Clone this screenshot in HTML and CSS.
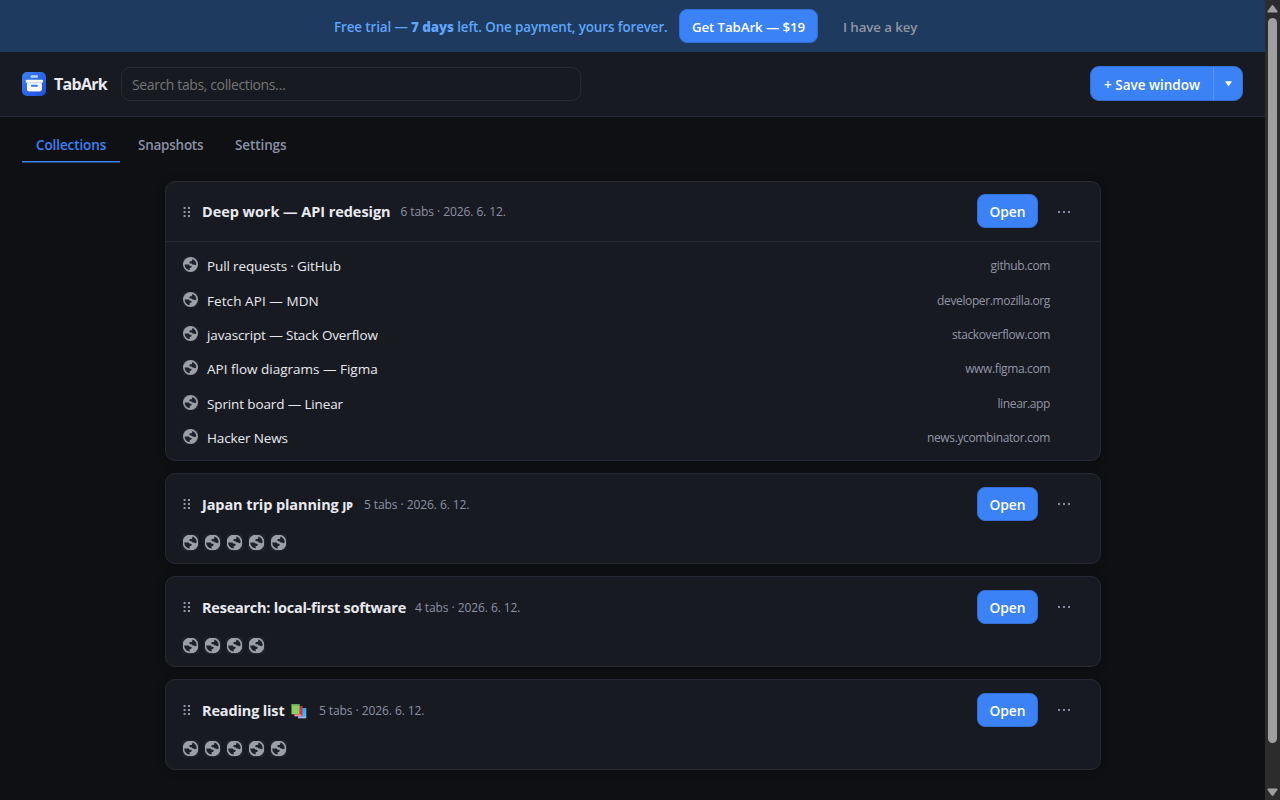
FILE: index.html
```html
<!DOCTYPE html>
<html lang="en">
<head>
<meta charset="utf-8">
<title>TabArk</title>
<link rel="stylesheet" href="styles.css">
</head>
<body>
<svg class="defs" aria-hidden="true">
  <symbol id="globe" viewBox="0 0 16 16">
    <circle cx="8" cy="8" r="8" fill="#9aa0a6"/>
    <path fill="#1e222c" d="M1.8 7.9H5.2C6.6 7.9 7 8.6 7.1 9.3H8.6C9.6 9.8 9.3 11.2 8.2 11.4H7.2V13.9C4 13.6 1.7 11.1 1.8 7.9zM9.8 2.1C12.3 2.9 14.2 5 14.2 7.7C13.6 8.9 12.2 8.9 11.6 8H10.3C9.6 7.9 9.4 7.3 9.2 6.8H7.6C6.4 6.3 6.6 4.7 7.8 4.4H9.2C9.8 4 9.9 3.2 9.8 2.1z"/>
  </symbol>
  <symbol id="grip" viewBox="0 0 8 12">
    <path fill="#9299a7" d="M.6 1h2v2h-2zM.6 5h2v2h-2zM.6 9h2v2h-2zM5 1h2v2H5zM5 5h2v2H5zM5 9h2v2H5z"/>
  </symbol>
</svg>
<div class="window">
  <div class="page">
    <div class="banner">
      <span class="trial">Free trial — <b>7 days</b> left. One payment, yours forever.</span>
      <button class="btn buy">Get TabArk — $19</button>
      <button class="ghost">I have a key</button>
    </div>
    <header class="header">
      <svg class="logo" viewBox="0 0 24 24">
        <defs><linearGradient id="lg" x1="0" y1="0" x2="1" y2="1"><stop offset="0" stop-color="#3b82f6"/><stop offset="1" stop-color="#1d4ed8"/></linearGradient></defs>
        <rect width="24" height="24" rx="5" fill="url(#lg)"/>
        <rect x="8.5" y="3.3" width="7.5" height="2.4" rx="1" fill="#b8d2fc"/>
        <rect x="3.7" y="7.8" width="17.3" height="3" rx="1.1" fill="#fff"/>
        <path fill="#dce8fd" d="M5 10.8h14.7v6.8a2 2 0 0 1-2 2H7a2 2 0 0 1-2-2z"/>
        <path fill="#fff" d="M5 11.6h14.7v5.4a2 2 0 0 1-2 2H7a2 2 0 0 1-2-2z"/>
        <rect x="9" y="12.8" width="6.8" height="2" rx=".7" fill="#3673ec"/>
      </svg>
      <span class="brand">TabArk</span>
      <input class="search" placeholder="Search tabs, collections…">
      <div class="split">
        <button class="save">+ Save window</button>
        <button class="caret"><svg viewBox="0 0 7 6"><path fill="#fff" d="M0 .3h7L3.5 5.6z"/></svg></button>
      </div>
    </header>
    <nav class="tabs">
      <a class="tab active">Collections</a>
      <a class="tab t2">Snapshots</a>
      <a class="tab t3">Settings</a>
    </nav>
    <main class="list">
      <section class="card">
        <div class="head ruled"><svg class="grip"><use href="#grip"/></svg><h2 class="n1">Deep work — API redesign</h2><span class="meta">6 tabs · 2026. 6. 12.</span><button class="btn open">Open</button><span class="more"><i></i><i></i><i></i></span></div>
        <div class="rows">
          <div class="row"><svg class="fav"><use href="#globe"/></svg><span class="tight">Pull requests · GitHub</span><em>github.com</em></div>
          <div class="row"><svg class="fav"><use href="#globe"/></svg><span class="loose">Fetch API — MDN</span><em>developer.mozilla.org</em></div>
          <div class="row"><svg class="fav"><use href="#globe"/></svg><span class="tight">javascript — Stack Overflow</span><em>stackoverflow.com</em></div>
          <div class="row"><svg class="fav"><use href="#globe"/></svg><span>API flow diagrams — Figma</span><em>www.figma.com</em></div>
          <div class="row"><svg class="fav"><use href="#globe"/></svg><span class="tight">Sprint board — Linear</span><em>linear.app</em></div>
          <div class="row"><svg class="fav"><use href="#globe"/></svg><span class="tight">Hacker News</span><em>news.ycombinator.com</em></div>
        </div>
      </section>
      <section class="card">
        <div class="head"><svg class="grip"><use href="#grip"/></svg><h2 class="n2">Japan trip planning <small>JP</small></h2><span class="meta">5 tabs · 2026. 6. 12.</span><button class="btn open">Open</button><span class="more"><i></i><i></i><i></i></span></div>
        <div class="favs"><svg><use href="#globe"/></svg><svg><use href="#globe"/></svg><svg><use href="#globe"/></svg><svg><use href="#globe"/></svg><svg><use href="#globe"/></svg></div>
      </section>
      <section class="card">
        <div class="head"><svg class="grip"><use href="#grip"/></svg><h2 class="n3">Research: local-first software</h2><span class="meta">4 tabs · 2026. 6. 12.</span><button class="btn open">Open</button><span class="more"><i></i><i></i><i></i></span></div>
        <div class="favs"><svg><use href="#globe"/></svg><svg><use href="#globe"/></svg><svg><use href="#globe"/></svg><svg><use href="#globe"/></svg></div>
      </section>
      <section class="card">
        <div class="head"><svg class="grip"><use href="#grip"/></svg><h2 class="n4">Reading list <svg class="books" viewBox="0 0 16 15"><defs><linearGradient id="bk" x1="0" y1="0" x2="0" y2="1"><stop offset="0" stop-color="#35a9ee"/><stop offset=".75" stop-color="#42b8f2"/><stop offset="1" stop-color="#c0b5f2"/></linearGradient></defs><path fill="url(#bk)" d="M7 4h8.3v10.3H7z"/><path fill="#d52b59" d="M3.5 2h8v10.3h-8z"/><path fill="#f08ba8" d="M3.5 10.5h7v1.8h-7z"/><path fill="#8bcf5d" d="M.5.3h8v10h-8z"/><path fill="#67b85b" d="M.5.3h8V2h-8z"/></svg></h2><span class="meta">5 tabs · 2026. 6. 12.</span><button class="btn open">Open</button><span class="more"><i></i><i></i><i></i></span></div>
        <div class="favs"><svg><use href="#globe"/></svg><svg><use href="#globe"/></svg><svg><use href="#globe"/></svg><svg><use href="#globe"/></svg><svg><use href="#globe"/></svg></div>
      </section>
    </main>
  </div>
  <div class="scrollbar">
    <svg viewBox="0 0 11 8"><path fill="#9f9f9f" d="M4.5.8a1.2 1.2 0 0 1 2 0L10.4 6a1 1 0 0 1-.8 1.6H1.4A1 1 0 0 1 .6 6z"/></svg>
    <div class="thumb"></div>
    <svg class="down" viewBox="0 0 11 8"><path fill="#9f9f9f" d="M4.5 7.2a1.2 1.2 0 0 0 2 0L10.4 2A1 1 0 0 0 9.6.4H1.4A1 1 0 0 0 .6 2z"/></svg>
  </div>
</div>
</body>
</html>
```
FILE: styles.css
```css
* { box-sizing: border-box; }
body { margin: 0; background: #0f1014; color: #e8eaf0; font: 14px/20px "Open Sans", "Noto Sans", sans-serif; overflow: hidden; }
button { border: 0; padding: 0; font: inherit; background: none; white-space: nowrap; }
span, h2, em, a { white-space: nowrap; }
.defs { position: absolute; width: 0; height: 0; }
.window { display: flex; width: 1280px; height: 800px; }
.page { width: 1265px; }
.banner { height: 52px; display: flex; align-items: center; padding: 0 0 0 334px; background: #1e3a5f; color: #60a5fa; font-size: 13px; font-weight: 600; }
.trial { width: 345px; font-size: 13.4px; letter-spacing: -.11px; padding-top: 2px; }
.btn { background: #3b82f6; color: #fff; font-weight: 600; border-radius: 8px; border: 1px solid #326fd4; }
.buy { width: 139px; height: 34px; font-size: 13.3px; letter-spacing: -.1px; padding-top: 2px; }
.ghost { margin-left: 25px; color: #9096a2; font-weight: 600; font-size: 13.3px; letter-spacing: -.1px; padding-top: 1px; }
.header { height: 65px; display: flex; align-items: center; padding: 0 22px; background: #181a21; border-bottom: 1px solid #272a36; }
.logo { width: 24px; height: 24px; }
.brand { width: 67px; margin-left: 8px; font-size: 16px; font-weight: 700; letter-spacing: -.7px; }
.search { width: 460px; height: 34px; padding: 0 10px; border: 1px solid #272a36; border-radius: 9px; background: #181a21; font: 14px "Open Sans", sans-serif; letter-spacing: -.38px; }
.search::placeholder { color: #757575; }
.split { width: 153px; height: 35px; margin: -1px 0 0 auto; display: flex; background: #3b82f6; border: 1px solid #326fd4; border-radius: 9px; overflow: hidden; }
.save { width: 122px; color: #fff; font-weight: 600; font-size: 13.5px; padding-top: 3px; }
.caret { flex: 1; border-left: 1px solid #6193ea; display: flex; align-items: center; justify-content: center; }
.caret svg { width: 7px; height: 6px; margin: 1px 0 0; }
.tabs { height: 46px; display: flex; padding-left: 22px; font-size: 13.5px; font-weight: 600; color: #8b92a5; }
.tab { height: 45px; padding: 18px 14px 0; letter-spacing: -.1px; }
.tab.active { width: 98px; color: #3b82f6; border-bottom: 1px solid #3b82f6; box-shadow: 0 1px #24497f; }
.t2 { padding-left: 18px; width: 97px; letter-spacing: -.25px; }
.t3 { padding-left: 18px; }
.list { width: 936px; margin: 18px 0 0 165px; display: flex; flex-direction: column; gap: 12px; }
.card { min-height: 91.1px; border: 1px solid #272a36; border-radius: 10px; background: #181a21; box-shadow: 0 1px 8px rgba(0,0,0,.3); }
.head { height: 60px; display: flex; align-items: center; padding: 0 28px 0 17px; }
.ruled { border-bottom: 1px solid #272a36; }
.grip { width: 8px; height: 12px; margin-right: 11px; }
h2 { margin: 0 10px 0 0; font-size: 14.5px; line-height: 20px; font-weight: 700; }
h2 small { font-size: 10.5px; font-weight: 800; letter-spacing: .3px; }
.n1 { width: 188.5px; letter-spacing: -.05px; }
.n2 { width: 152px; letter-spacing: -.1px; padding-top: 2px; }
.n3 { width: 203px; letter-spacing: -.24px; padding-top: 2px; }
.n4 { width: 107px; letter-spacing: -.15px; padding-top: 2px; }
h2:not(.n1) + .meta { padding-top: 2px; }
.books { width: 16px; height: 15px; vertical-align: -3px; margin-left: 3px; }
.meta { color: #8b92a5; font-size: 12px; letter-spacing: -.08px; }
.open { width: 61px; height: 34px; margin: -1px 0 0 auto; font-size: 13.8px; letter-spacing: -.1px; padding-top: 2px; }
.more { width: 14px; margin-left: 20px; display: flex; gap: 3px; }
.more i { width: 2px; height: 2px; background: #858c9d; }
.rows { height: 218px; padding: 7px 50px 0 17px; }
.row { height: 34.4px; display: flex; align-items: center; }
.row span { font-size: 13.5px; }
.row span.tight { letter-spacing: -.13px; }
.row span.loose { letter-spacing: .08px; }
.row em { margin: 0 0 0 auto; font-style: normal; font-size: 12px; letter-spacing: -.37px; color: #9096a6; }
.fav { width: 15px; height: 15px; margin: -3px 9px 0 0; background: #1e222c; border-radius: 3px; }
.favs { display: flex; gap: 5px; padding: 0 16px; }
.favs svg { width: 17px; height: 17px; padding: .5px; background: #1f222b; border-radius: 3px; }
.scrollbar { width: 15px; height: 800px; background: #2c2c2c; display: flex; flex-direction: column; align-items: center; padding: 5px 0 4px; }
.scrollbar svg { width: 11px; height: 8px; }
.thumb { width: 9px; height: 725px; margin-top: 5px; border-radius: 5px; background: #9f9f9f; }
.down { margin-top: auto; }
```
